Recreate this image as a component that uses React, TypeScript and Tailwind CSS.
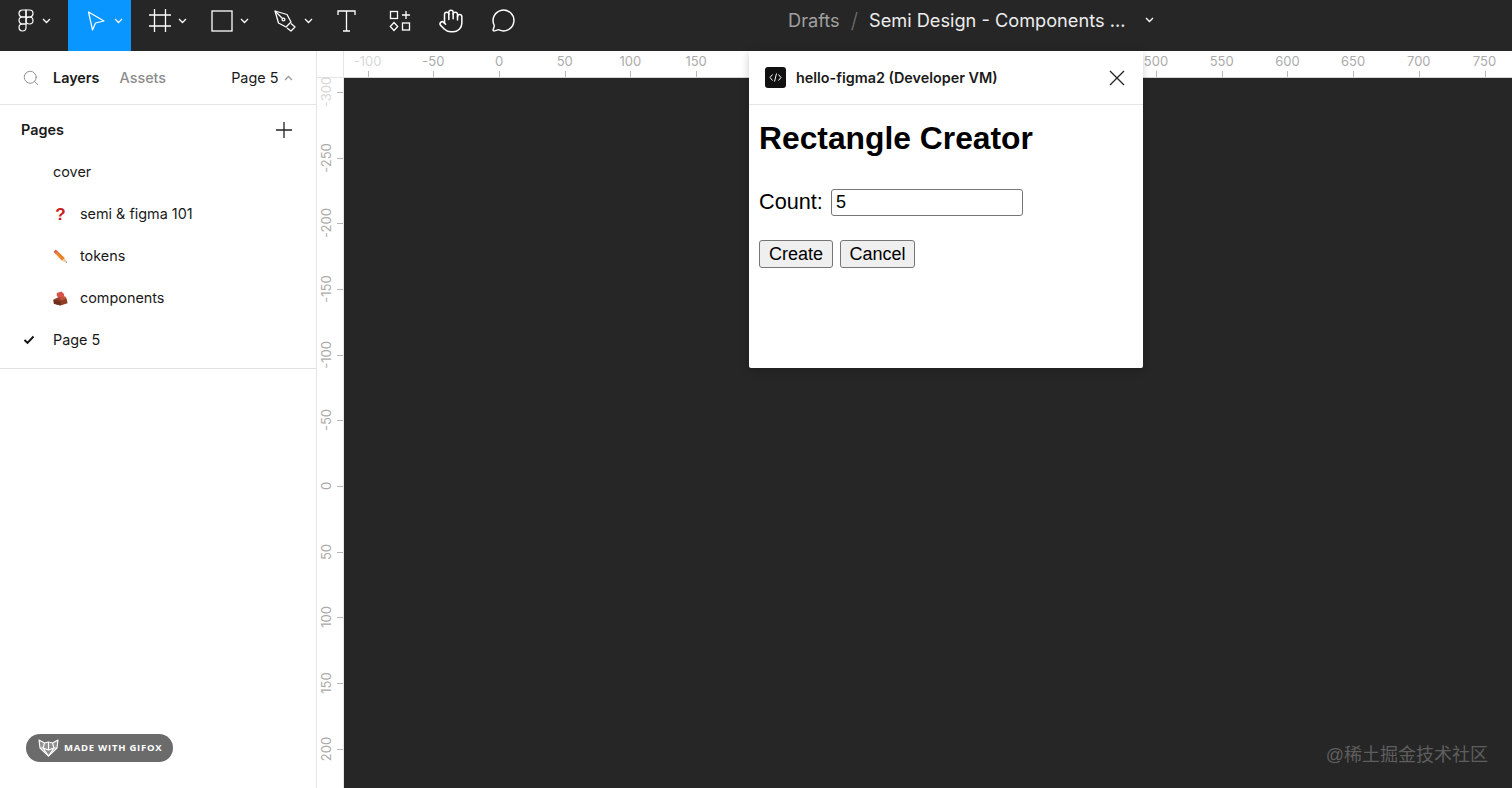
import { Hand, MessageCircle, Search } from "lucide-react";

const sans = "font-['Inter','Liberation_Sans',sans-serif]";

function Chevron({ up = false }: { up?: boolean }) {
  return (
    <svg width="9" height="6" viewBox="0 0 9 6" fill="none" stroke="currentColor" strokeWidth="1.3">
      <path d={up ? "M1 5 L4.5 1.5 L8 5" : "M1 1 L4.5 4.5 L8 1"} />
    </svg>
  );
}

function FigmaLogo() {
  return (
    <svg width="16" height="23" viewBox="0 0 16 23" fill="none" stroke="white" strokeWidth="1.2">
      <path d="M8 1H4.5a3.5 3.5 0 0 0 0 7H8z" />
      <path d="M8 1h3.5a3.5 3.5 0 0 1 0 7H8z" />
      <path d="M8 8H4.5a3.5 3.5 0 0 0 0 7H8z" />
      <circle cx="11.5" cy="11.5" r="3.5" />
      <path d="M4.5 15H8v3.5a3.5 3.5 0 1 1-3.5-3.5z" />
    </svg>
  );
}

function Cursor() {
  return (
    <svg width="19" height="20" viewBox="0 0 19 20" fill="none" stroke="white" strokeWidth="1.2" strokeLinejoin="round">
      <path d="M1.5 1 L17 10 L8.5 12 L5.5 19 Z" />
    </svg>
  );
}

function FrameTool() {
  return (
    <svg width="22" height="23" viewBox="0 0 22 23" fill="none" stroke="white" strokeWidth="1.3">
      <path d="M0 6H22M0 17H22M5.5 0V23M16.5 0V23" />
    </svg>
  );
}

function RectTool() {
  return (
    <svg width="22" height="22" viewBox="0 0 22 22" fill="none" stroke="white" strokeWidth="1.3">
      <rect x="1" y="1" width="20" height="20" />
    </svg>
  );
}

function PenTool() {
  return (
    <svg width="22" height="22" viewBox="0 0 22 22" fill="none" stroke="white" strokeWidth="1.3" strokeLinejoin="round">
      <path d="M1 1 L13 4.5 L17 12 L12 17 L4.5 13 Z" />
      <circle cx="9.5" cy="9.5" r="1.4" />
      <path d="M1 1 L8.5 8.5" />
      <path d="M17 13.5 L21 17 L17 21 L13 18" />
    </svg>
  );
}

function TextTool() {
  return (
    <svg width="19" height="22" viewBox="0 0 19 22" fill="none" stroke="white" strokeWidth="1.3">
      <path d="M1 5V1H18V5M9.5 1V21M6 21H13" />
    </svg>
  );
}

function ComponentsTool() {
  return (
    <svg width="22" height="22" viewBox="0 0 22 22" fill="none" stroke="white" strokeWidth="1.3">
      <rect x="1.5" y="1.5" width="7" height="7" />
      <path d="M17 1V9M13 5H21" />
      <path d="M5 12.5 L8.7 16.5 L5 20.5 L1.3 16.5 Z" />
      <rect x="13.5" y="13" width="7" height="7" />
    </svg>
  );
}

function Pencil() {
  return (
    <svg width="17" height="17" viewBox="0 0 16 16">
      <path d="M0.5 3 L3 0.5 L5.5 3 L3 5.5 Z" fill="#e0605a" />
      <path d="M2.5 5 L5 2.5 L12.5 9.5 L9.5 12.5 Z" fill="#f0882a" />
      <path d="M4.5 3.5 L11.5 10.5" stroke="#d96a14" strokeWidth="0.8" />
      <path d="M9.5 12.5 L12.5 9.5 L15 15 Z" fill="#e8c9a0" />
      <path d="M13.5 14.2 L15 15 L14.4 13.4 Z" fill="#666" />
    </svg>
  );
}

function Bricks() {
  return (
    <svg width="17" height="17" viewBox="0 0 16 16">
      <path d="M4 2 L9 0.5 L12 3.5 L11.5 6.5 L6.5 8 L4 5 Z" fill="#d9534a" />
      <path d="M0.5 9 L6.5 6.5 L14.5 8 L15.5 13 L8 15.5 L1 13.5 Z" fill="#8f3f26" />
      <path d="M6.5 7 L13 5.5 L14.5 8 L8.5 10 Z" fill="#c4503a" />
      <path d="M1 13.5 L8 15.5 L8 11 L0.5 9.5 Z" fill="#6d2f1c" />
    </svg>
  );
}

function Fox() {
  return (
    <svg width="21" height="18" viewBox="0 0 21 18" fill="none" stroke="white" strokeWidth="1.1" strokeLinejoin="round">
      <path d="M1 1 L6.5 4 L10.5 3 L14.5 4 L20 1 L19 9 L10.5 17 L2 9 Z" fill="rgba(255,255,255,0.25)" />
      <path d="M6.5 4 L5 9 L10.5 17 L16 9 L14.5 4 M5 9 L10.5 11 L16 9 M2 9 L5 9 M19 9 L16 9 M10.5 3 V11" />
    </svg>
  );
}

const hTicks = [-100, -50, 0, 50, 100, 150, 200, 250, 300, 350, 400, 450, 500, 550, 600, 650, 700, 750];
const vTicks = [-300, -250, -200, -150, -100, -50, 0, 50, 100, 150, 200];
const pages = [
  { name: "cover", icon: null, check: false },
  { name: "semi & figma 101", icon: <span className="font-['Liberation_Sans',sans-serif] text-[17px] font-bold leading-none text-[#c8201a]">?</span>, check: false },
  { name: "tokens", icon: <Pencil />, check: false },
  { name: "components", icon: <Bricks />, check: false },
  { name: "Page 5", icon: null, check: true },
];

export default function App() {
  return (
    <div className={`relative flex h-[788px] w-[1512px] flex-col overflow-hidden bg-white ${sans}`}>
      <header className="flex h-[51px] shrink-0 items-stretch bg-[#262626] text-white">
        <div className="flex w-[68px] items-center pb-[10px] pl-[18px]">
          <FigmaLogo />
          <span className="ml-[8px] flex"><Chevron /></span>
        </div>
        <div className="flex w-[63px] items-center bg-[#0a96ff] pb-[10px] pl-[19px]">
          <Cursor />
          <span className="ml-[8px] flex"><Chevron /></span>
        </div>
        <div className="flex w-[63px] items-center pb-[10px] pl-[18px]">
          <FrameTool />
          <span className="ml-[7px] flex"><Chevron /></span>
        </div>
        <div className="flex w-[62px] items-center pb-[10px] pl-[17px]">
          <RectTool />
          <span className="ml-[7px] flex"><Chevron /></span>
        </div>
        <div className="flex w-[63px] items-center pb-[10px] pl-[18px]">
          <PenTool />
          <span className="ml-[8px] flex"><Chevron /></span>
        </div>
        <div className="flex w-[54px] items-center pb-[10px] pl-[18px]">
          <TextTool />
        </div>
        <div className="flex w-[52px] items-center pb-[10px] pl-[16px]">
          <ComponentsTool />
        </div>
        <div className="flex w-[52px] items-center pb-[10px] pl-[13px]">
          <Hand size={26} strokeWidth={1.4} />
        </div>
        <div className="flex w-[53px] items-center pb-[10px] pl-[14px]">
          <MessageCircle size={25} strokeWidth={1.4} />
        </div>
        <div className="ml-[258px] flex items-center pb-[11px] text-[18.2px] leading-none">
          <span className="text-[#a0a0a0]">Drafts</span>
          <span className="ml-[11px] text-[21px] font-light text-[#6e6e6e]">/</span>
          <span className="ml-[11px] w-[258px] whitespace-nowrap text-[#ededed]">Semi Design - Components ...</span>
          <span className="ml-[18px] flex"><Chevron /></span>
        </div>
      </header>

      <div className="flex min-h-0 flex-1">
        <aside className="relative flex w-[317px] shrink-0 flex-col border-r border-[#e5e5e5] bg-white text-[14.4px] text-[#1a1a1a]">
          <div className="flex h-[54px] shrink-0 items-center border-b border-[#e5e5e5] pl-[22px]">
            <Search size={18} strokeWidth={1.3} className="text-[#8f8f8f]" />
            <span className="ml-[13px] font-semibold">Layers</span>
            <span className="ml-[20px] font-medium text-[#8c8c8c]">Assets</span>
            <span className="ml-[65px]">Page 5</span>
            <span className="ml-[6px] text-[#9a9a9a]"><Chevron up /></span>
          </div>
          <div className="flex h-[46px] shrink-0 items-center justify-between pl-[21px] pr-[24px] pt-[3px]">
            <span className="font-semibold">Pages</span>
            <svg width="16" height="16" viewBox="0 0 16 16" stroke="#222" strokeWidth="1.3">
              <path d="M8 0V16M0 8H16" />
            </svg>
          </div>
          <ul className="flex flex-col border-b border-[#e0e0e0] pb-[7px]">
            {pages.map((p) => (
              <li key={p.name} className="flex h-[42px] items-center">
                <span className="flex w-[53px] shrink-0 justify-center pl-[5px]">
                  {p.check && (
                    <svg width="12" height="10" viewBox="0 0 12 10" fill="none" stroke="#111" strokeWidth="1.9">
                      <path d="M1.5 5 L4.5 8 L10.5 1.5" />
                    </svg>
                  )}
                </span>
                {p.icon ? (
                  <>
                    <span className="flex w-[27px] shrink-0 items-center">
                      <span className="flex w-[15px] justify-center">{p.icon}</span>
                    </span>
                    <span>{p.name}</span>
                  </>
                ) : (
                  <span>{p.name}</span>
                )}
              </li>
            ))}
          </ul>
          <div className="absolute left-[26px] top-[683px] flex h-[28px] w-[147px] items-center rounded-full bg-[#6b6b6b] pl-[12px] text-white">
            <Fox />
            <span className="ml-[5px] whitespace-nowrap font-['Open_Sans',sans-serif] text-[9.5px] font-bold tracking-[0.75px]">MADE WITH GIFOX</span>
          </div>
        </aside>

        <main className="flex min-w-0 flex-1 flex-col">
          <div className="flex h-[27px] shrink-0">
            <div className="h-full w-[27px] shrink-0 border-b border-r border-[#e5e5e5]" />
            <div className="relative flex-1 border-b border-[#d4d4d4] bg-white">
              {hTicks.map((v, i) => {
                const left = 499 + v * 1.314 - 344;
                return (
                  <div key={v} className="absolute top-0 h-full" style={{ left }}>
                    <span className={`absolute top-[2px] -translate-x-1/2 text-[13px] leading-[16px] ${i === 0 ? "text-[#d8d8d8]" : "text-[#ababab]"}`}>{v}</span>
                    <span className="absolute bottom-0 h-[6px] w-px bg-[#b8b8b8]" />
                  </div>
                );
              })}
            </div>
          </div>
          <div className="flex min-h-0 flex-1">
            <div className="relative w-[27px] shrink-0 border-r border-[#e5e5e5] bg-white">
              {vTicks.map((v, i) => {
                const top = 486 + v * 1.314 - 78;
                return (
                  <div key={v} className="absolute left-0 w-full" style={{ top }}>
                    <span className={`absolute left-[9px] top-0 -translate-x-1/2 -translate-y-1/2 -rotate-90 whitespace-nowrap text-[13px] leading-[16px] ${i === 0 ? "text-[#d8d8d8]" : "text-[#ababab]"}`}>{v}</span>
                    <span className="absolute right-0 h-px w-[6px] bg-[#b8b8b8]" />
                  </div>
                );
              })}
            </div>
            <div className="flex-1 bg-[#262626]" />
          </div>
        </main>
      </div>

      <section className="absolute left-[749px] top-[51px] flex h-[317px] w-[394px] flex-col rounded-b-[2px] bg-white shadow-[0_2px_8px_rgba(0,0,0,0.2)]">
        <div className="flex h-[54px] shrink-0 items-center border-b border-[#e5e5e5] pl-[16px] pr-[18px]">
          <span className="flex h-[21px] w-[21px] items-center justify-center rounded-[3px] bg-[#111]">
            <svg width="13" height="9" viewBox="0 0 13 9" fill="none" stroke="white" strokeWidth="1">
              <path d="M3.5 1.5 L1 4.5 L3.5 7.5M9.5 1.5 L12 4.5 L9.5 7.5M7.5 0.5 L5.5 8.5" />
            </svg>
          </span>
          <span className="ml-[10px] flex-1 text-[14.4px] font-semibold text-[#1a1a1a]">hello-figma2 (Developer VM)</span>
          <svg width="16" height="16" viewBox="0 0 16 16" stroke="#222" strokeWidth="1.3">
            <path d="M1 1L15 15M15 1L1 15" />
          </svg>
        </div>
        <div className="flex flex-col px-[10px] font-['Liberation_Sans',Arial,sans-serif] text-black">
          <h1 className="mt-[15px] text-[31.8px] font-bold leading-[37px]">Rectangle Creator</h1>
          <div className="mt-[32px] flex items-center">
            <label className="mb-[2px] text-[21.7px] leading-[25px]">Count:</label>
            <input
              readOnly
              value="5"
              className="ml-[8px] h-[27px] w-[192px] rounded-[3px] border border-[#767676] bg-white px-[4px] text-[18px] text-black outline-none"
            />
          </div>
          <div className="mt-[24px] flex gap-[7px]">
            <button className="h-[28px] w-[74px] rounded-[3px] border border-[#767676] bg-[#efefef] text-[18px] leading-none text-black">Create</button>
            <button className="h-[28px] w-[75px] rounded-[3px] border border-[#767676] bg-[#efefef] text-[18px] leading-none text-black">Cancel</button>
          </div>
        </div>
      </section>

      <div className="absolute right-[24px] top-[743px] whitespace-nowrap font-['Liberation_Sans','Noto_Sans_CJK_SC',sans-serif] text-[18px] leading-[24px] text-[#5e5e5e]">
        @稀土掘金技术社区
      </div>
    </div>
  );
}
